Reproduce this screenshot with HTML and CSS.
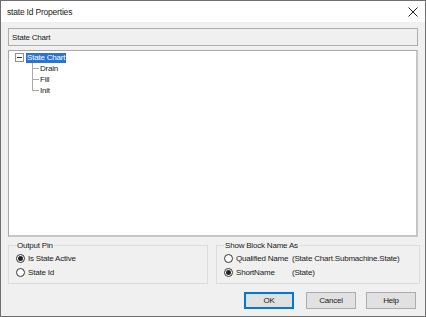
FILE: index.html
```html
<!DOCTYPE html>
<html>
<head>
<meta charset="utf-8">
<link rel="stylesheet" href="styles.css">
</head>
<body>
<div class="window">
  <div class="titlebar">
    <span class="title">state Id Properties</span>
    <svg class="close" width="10" height="10" viewBox="0 0 10 10"><path d="M0.5 0.5 L9.5 9.5 M9.5 0.5 L0.5 9.5" stroke="#222" stroke-width="1"/></svg>
  </div>
  <div class="content">
    <div class="field">State Chart</div>
    <div class="tree">
      <div class="node root">
        <span class="expander"><svg width="9" height="9" viewBox="0 0 9 9"><rect x="0.5" y="0.5" width="8" height="8" fill="#fff" stroke="#919191"/><path d="M2 4.5 H7" stroke="#333"/></svg></span>
        <span class="sel">State Chart</span>
      </div>
      <div class="children">
        <div class="node child"><span class="hline"></span><span>Drain</span></div>
        <div class="node child"><span class="hline"></span><span>Fill</span></div>
        <div class="node child"><span class="hline"></span><span>Init</span></div>
      </div>
    </div>
    <div class="groups">
      <fieldset class="group first">
        <legend>Output Pin</legend>
        <div class="radio-row"><span class="radio checked"></span><span>Is State Active</span></div>
        <div class="radio-row"><span class="radio"></span><span>State Id</span></div>
      </fieldset>
      <fieldset class="group second">
        <legend>Show Block Name As</legend>
        <div class="radio-row"><span class="radio"></span><span class="opt">Qualified Name</span><span>(State Chart.Submachine.State)</span></div>
        <div class="radio-row"><span class="radio checked"></span><span class="opt">ShortName</span><span>(State)</span></div>
      </fieldset>
    </div>
    <div class="buttons">
      <button class="btn default">OK</button>
      <button class="btn cancel">Cancel</button>
      <button class="btn">Help</button>
    </div>
  </div>
</div>
</body>
</html>
```
FILE: styles.css
```css
html, body {
  margin: 0;
  padding: 0;
  background: #f0f0f0;
}
body {
  font-family: "Liberation Sans", Arial, sans-serif;
  font-size: 8px;
  letter-spacing: -0.2px;
  color: #1a1a1a;
}
.window {
  width: 426px;
  height: 317px;
  box-sizing: border-box;
  border: 1px solid #6f6f6f;
  background: #f0f0f0;
  display: flex;
  flex-direction: column;
}
.titlebar {
  height: 21px;
  background: #fff;
  display: flex;
  align-items: center;
  justify-content: space-between;
  padding: 0 7px 0 6px;
  flex: none;
}
.title {
  font-size: 8.5px;
}
.content {
  padding: 6px 7px 0 7px;
  display: flex;
  flex-direction: column;
}
.field {
  height: 18px;
  box-sizing: border-box;
  border: 1px solid #adadad;
  background: #f0f0f0;
  padding: 0 3px;
  display: flex;
  align-items: center;
}
.tree {
  margin-top: 4px;
  height: 187px;
  box-sizing: border-box;
  background: #fff;
  border-style: solid;
  border-width: 1px 2px 2px 1px;
  border-color: #a8a8a8 #c6c6c6 #c6c6c6 #a8a8a8;
  padding: 1px 0 0 6px;
}
.node {
  height: 11px;
  display: flex;
  align-items: center;
}
.expander {
  width: 9px;
  height: 9px;
  display: flex;
  margin-right: 2px;
}
.sel {
  background: #2a72d4;
  color: #fff;
  padding: 0 1px;
  height: 10px;
  line-height: 10px;
}
.children {
  margin-left: 17px;
  border-left: 1px solid #a9a9a9;
  height: 28px;
}
.hline {
  width: 6px;
  border-top: 1px solid #a9a9a9;
  margin-right: 1px;
}
.groups {
  margin-top: 4px;
  display: flex;
  gap: 8px;
}
.group {
  margin: 0;
  height: 43px;
  box-sizing: border-box;
  border: 1px solid #dcdcdc;
  padding: 1px 0 0 7px;
  flex: none;
}
.group.first {
  width: 200px;
}
.group.second {
  width: 204px;
}
.group legend {
  padding: 0 1px;
  margin-left: 0;
  font-size: 8px;
}
.radio-row {
  height: 14px;
  display: flex;
  align-items: center;
}
.radio {
  width: 9px;
  height: 9px;
  box-sizing: border-box;
  border: 1px solid #333;
  border-radius: 50%;
  background: #fff;
  margin-right: 3px;
  display: flex;
  align-items: center;
  justify-content: center;
}
.radio.checked::after {
  content: "";
  width: 5px;
  height: 5px;
  border-radius: 50%;
  background: #222;
}
.opt {
  width: 56px;
}
.buttons {
  margin-top: 8px;
  display: flex;
  justify-content: flex-end;
  gap: 10px;
  padding-right: 2px;
}
.btn {
  width: 50px;
  height: 17px;
  box-sizing: border-box;
  background: #e1e1e1;
  border: 1px solid #adadad;
  font-family: "Liberation Sans", Arial, sans-serif;
  font-size: 8px;
  letter-spacing: -0.2px;
  padding: 0;
  color: #1a1a1a;
}
.btn.cancel {
  margin-left: 2px;
}
.btn.default {
  border: 1px solid #0078d7;
  box-shadow: inset 0 0 0 1px #0078d7;
}
```
